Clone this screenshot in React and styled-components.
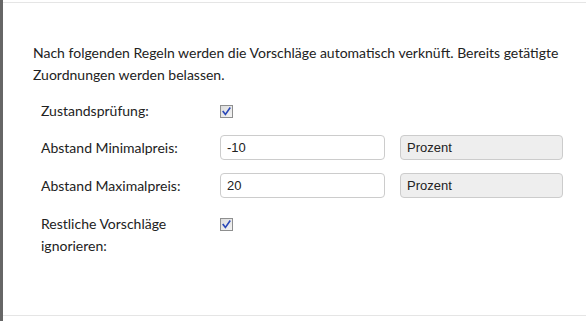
import React from 'react';
import styled, { createGlobalStyle } from "styled-components";

const Global = createGlobalStyle`
    html, body {
        margin: 0;
        padding: 0;
        background: #ffffff;
    }
    body {
        width: 586px;
        height: 321px;
        overflow: hidden;
    }
`

const Page = styled.div`
    display: flex;
    width: 586px;
    height: 321px;
`

const Backdrop = styled.div`
    width: 3px;
    background: #666666;
    flex-shrink: 0;
`

const Modal = styled.div`
    flex: 1;
    display: flex;
    flex-direction: column;
    background: #fff;
    border-top: 1px solid #e5e5e5;
    border-bottom: 1px solid #e5e5e5;
    margin-top: 2px;
    height: 314px;
    box-sizing: border-box;
`

const Body = styled.div`
    padding: 39px 20px 0 30px;
    font-family: "Source Sans Pro", "Lato", sans-serif;
    font-size: 14px;
    color: #222;
`

const Intro = styled.p`
    margin: 0 0 14px 0;
    line-height: 22px;
`

const Rows = styled.div`
    display: flex;
    flex-direction: column;
    gap: 13px;
    padding-left: 8px;
`

const Row = styled.div`
    display: flex;
    align-items: ${p => p.top ? 'flex-start' : 'center'};
    min-height: ${p => p.tall ? 25 : 22}px;
    margin-top: ${p => p.top ? '2px' : '0'};
`

const Label = styled.div`
    width: 179px;
    line-height: 22px;
    flex-shrink: 0;
`

const CheckBox = styled.span`
    display: inline-flex;
    align-items: center;
    justify-content: center;
    width: 13px;
    height: 13px;
    box-sizing: border-box;
    border: 1px solid #8e8f8f;
    background: linear-gradient(135deg, #dcdcdc 0%, #f4f4f4 100%);
    margin-top: ${p => p.top ? '5px' : '0'};
`

const Check = ({ top }) => (
    <CheckBox top={top}>
        <svg width="9" height="9" viewBox="0 0 9 9">
            <path d="M1.2 4.6 L3.4 7.4 L7.8 1.2" fill="none" stroke="#2a48b8" strokeWidth="1.6" strokeLinecap="square" />
        </svg>
    </CheckBox>
)

const Field = styled.div`
    width: ${p => p.w}px;
    height: 25px;
    box-sizing: border-box;
    border: 1px solid #cccccc;
    border-radius: 4px;
    background: ${p => p.disabled ? '#eeeeee' : '#ffffff'};
    font-family: "Liberation Sans", Arial, sans-serif;
    font-size: 13px;
    color: #222;
    display: flex;
    align-items: center;
    padding-left: 6px;
    margin-right: 15px;
`

const App = () => {
    return (
        <>
        <Global />
        <Page>
            <Backdrop />
            <Modal>
                <Body>
                    <Intro>
                        Nach folgenden Regeln werden die Vorschläge automatisch verknüft. Bereits getätigte Zuordnungen werden belassen.
                    </Intro>
                    <Rows>
                        <Row>
                            <Label>Zustandsprüfung:</Label>
                            <Check />
                        </Row>
                        <Row tall>
                            <Label>Abstand Minimalpreis:</Label>
                            <Field w={165}>-10</Field>
                            <Field w={163} disabled>Prozent</Field>
                        </Row>
                        <Row tall>
                            <Label>Abstand Maximalpreis:</Label>
                            <Field w={165}>20</Field>
                            <Field w={163} disabled>Prozent</Field>
                        </Row>
                        <Row top>
                            <Label>Restliche Vorschläge<br />ignorieren:</Label>
                            <Check top />
                        </Row>
                    </Rows>
                </Body>
            </Modal>
        </Page>
        </>
    )
}

export default App
